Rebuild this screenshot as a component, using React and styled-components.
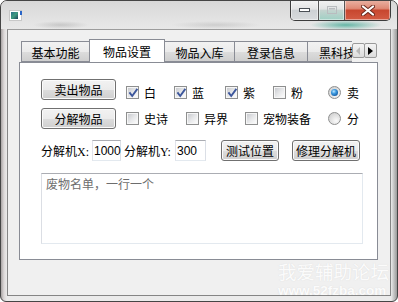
import React from "react";
import styled, { createGlobalStyle } from "styled-components";

const Global = createGlobalStyle`
  html, body { margin: 0; padding: 0; background: #fff; }
  body { font-family: "Liberation Sans", "Noto Sans CJK SC", sans-serif; font-size: 12px; color: #000; }
  * { box-sizing: border-box; }
`;

const Window = styled.div`
  position: relative;
  width: 398px;
  height: 302px;
  border: 1px solid #454545;
  border-radius: 7px 7px 6px 6px;
  background: linear-gradient(to right, #a9a4a4 0px, #dcd8d8 3px, #ebebeb 6px, #ebebeb calc(100% - 6px), #b5b5b5 calc(100% - 2px), #9a9a9a 100%);
  display: flex;
  flex-direction: column;
  overflow: hidden;
`;

const TitleBar = styled.div`
  height: 28px;
  flex: none;
  display: flex;
  align-items: flex-start;
  padding-left: 8px;
  background:
    radial-gradient(ellipse 36px 5px at 345px 24px, rgba(70,170,150,0.8), rgba(70,170,150,0)),
    radial-gradient(ellipse 28px 4px at 60px 24px, rgba(120,120,120,0.28), rgba(120,120,120,0)),
    radial-gradient(ellipse 45px 4px at 215px 24px, rgba(120,120,120,0.22), rgba(120,120,120,0)),
    linear-gradient(#d8d8d8, #e8e8e8);
`;

const AppIcon = styled.svg`
  margin-top: 9px;
  flex: none;
`;

const Captions = styled.div`
  margin-left: auto;
  margin-right: 6px;
  margin-top: -1px;
  display: flex;
  height: 21px;
  border: 1px solid #3c3c3c;
  border-top: none;
  border-radius: 0 0 5px 5px;
  overflow: hidden;
`;

const CapBtn = styled.div`
  width: ${(p) => p.$w}px;
  display: flex;
  align-items: center;
  justify-content: center;
  border-left: ${(p) => (p.$first ? "none" : "1px solid #555")};
  background: ${(p) =>
    p.$close
      ? "linear-gradient(#eab3a4 0%, #df8a76 42%, #c8472f 52%, #d35b43 100%)"
      : p.$glow
      ? "linear-gradient(#f3f3f3 0%, #e2e4e4 45%, #c4d3cf 52%, #9fd0c4 100%)"
      : "linear-gradient(#f4f4f4 0%, #e4e4e4 45%, #cdd1d4 52%, #d8dbdd 100%)"};
  box-shadow: inset 0 0 0 1px rgba(255, 255, 255, 0.45);
`;

const Client = styled.div`
  margin: 0 6px;
  height: 267px;
  flex: none;
  border: 1px solid #858585;
  border-top-color: #9c9c9c;
  background: #f0f0f0;
  padding: 9px 12px 0 11px;
`;

const TabStrip = styled.div`
  height: 23px;
  display: flex;
  align-items: flex-end;
`;

const TabList = styled.div`
  flex: 1;
  display: flex;
  align-items: flex-end;
  height: 100%;
  padding-left: 2px;
  overflow: hidden;
`;

const Tab = styled.div`
  flex: none;
  width: ${(p) => p.$w}px;
  height: ${(p) => (p.$active ? 24 : 21)}px;
  margin-left: ${(p) => (p.$first ? 0 : -1)}px;
  margin-bottom: ${(p) => (p.$active ? -1 : 0)}px;
  position: relative;
  z-index: ${(p) => (p.$active ? 2 : 1)};
  border: 1px solid #898c95;
  border-bottom: ${(p) => (p.$active ? "none" : "1px solid #898c95")};
  background: ${(p) => (p.$active ? "#fff" : "linear-gradient(#f2f2f2 0%, #ebebeb 50%, #dddddd 51%, #cfcfcf 100%)")};
  display: flex;
  align-items: center;
  justify-content: ${(p) => (p.$clip ? "flex-start" : "center")};
  padding-left: ${(p) => (p.$clip ? 11 : 0)}px;
  padding-top: ${(p) => (p.$active ? 0 : 1)}px;
  font-size: 12px;
  white-space: nowrap;
  overflow: hidden;
`;

const Scroller = styled.div`
  flex: none;
  display: flex;
  align-self: flex-end;
  margin: 0 1px 4px 0;
`;

const ScrollBtn = styled.div`
  width: 13px;
  height: 15px;
  margin-left: ${(p) => (p.$second ? -1 : 0)}px;
  border: 1px solid #9a9a9a;
  border-radius: 2px;
  background: linear-gradient(#f4f4f4, #dcdcdc);
  display: flex;
  align-items: center;
  justify-content: center;
`;

const Panel = styled.div`
  height: 198px;
  border: 1px solid #898c95;
  background: #fff;
  padding: 16px 0 0 21px;
  display: flex;
  flex-direction: column;
`;

const Row = styled.div`
  display: flex;
  align-items: center;
  height: 21px;
  margin-top: ${(p) => p.$mt || 0}px;
`;

const Button = styled.div`
  flex: none;
  width: ${(p) => p.$w}px;
  height: 21px;
  margin-left: ${(p) => p.$ml || 0}px;
  border: 1px solid #707070;
  border-radius: 3px;
  background: linear-gradient(#f2f2f2 0%, #ebebeb 50%, #dddddd 51%, #cfcfcf 100%);
  box-shadow: inset 0 0 0 1px #fbfbfb;
  display: flex;
  align-items: center;
  justify-content: center;
  font-size: 12px;
  white-space: nowrap;
`;

const Options = styled.div`
  display: flex;
  align-items: center;
  margin-left: 10px;
  transform: translateY(${(p) => p.$dy || 0}px);
`;

const Option = styled.label`
  flex: none;
  width: ${(p) => p.$w}px;
  display: flex;
  align-items: center;
  gap: 5px;
  font-size: 12px;
  white-space: nowrap;
`;

const Box = styled.span`
  flex: none;
  position: relative;
  width: 13px;
  height: 13px;
  border: 1px solid #8e8f8f;
  background: #f6f6f6;
  &::before {
    content: "";
    position: absolute;
    left: 1px;
    top: 1px;
    width: 9px;
    height: 9px;
    background: linear-gradient(135deg, #c9cbcf 0%, #e6e7e9 50%, #fbfbfb 100%);
  }
  svg { position: absolute; left: 0; top: 0; }
`;

const Radio = styled.span`
  flex: none;
  position: relative;
  width: 13px;
  height: 13px;
  border-radius: 50%;
  border: 1px solid #8e8f8f;
  background: radial-gradient(circle at 65% 70%, #fafafa 0%, #dcdcdc 60%, #c8c8c8 100%);
  &::after {
    content: "";
    display: ${(p) => (p.$on ? "block" : "none")};
    position: absolute;
    left: 2px;
    top: 2px;
    width: 7px;
    height: 7px;
    border-radius: 50%;
    background: radial-gradient(circle at 40% 35%, #bfe9ff 0%, #3f9be0 35%, #155fa8 75%, #0d3b6e 100%);
  }
`;

const FieldLabel = styled.span`
  flex: none;
  width: ${(p) => p.$w}px;
  margin-left: ${(p) => p.$ml || 0}px;
  font-size: 12px;
  white-space: nowrap;
`;

const Latin = styled.span`
  font-family: "Liberation Serif", serif;
  font-size: 12px;
`;

const Input = styled.div`
  flex: none;
  width: ${(p) => p.$w}px;
  height: 21px;
  border: 1px solid #e2e3ea;
  border-top-color: #abadb3;
  border-bottom-color: #e3e9ef;
  border-right-color: #dbdfe6;
  background: #fff;
  padding: 2px 0 0 1px;
  font-family: "Liberation Sans", sans-serif;
  font-size: 12px;
  line-height: 16px;
`;

const TextArea = styled.div`
  width: 322px;
  height: 71px;
  margin-top: 12px;
  border: 1px solid #e3e9ef;
  border-top-color: #abadb3;
  border-left-color: #dbdee4;
  background: #fff;
  padding: 4px 0 0 4px;
  color: #6d6d6d;
  font-size: 12px;
  line-height: 14px;
`;

const Watermark = styled.div`
  position: absolute;
  left: 277px;
  top: 259px;
  display: flex;
  flex-direction: column;
  align-items: flex-start;
  color: rgba(255, 255, 255, 0.92);
  text-shadow: 0 0 1px rgba(200, 200, 200, 0.6);
  pointer-events: none;
`;

const WmTitle = styled.div`
  font-family: "Noto Sans CJK SC", sans-serif;
  font-size: 18.5px;
  line-height: 22px;
  letter-spacing: 0px;
`;

const WmUrl = styled.div`
  font-family: "Liberation Sans", sans-serif;
  font-weight: bold;
  font-size: 13.5px;
  line-height: 14px;
  margin-top: 2px;
`;

const Check = () => (
  <svg width="13" height="13" viewBox="0 0 13 13">
    <path d="M3 6.2 L5.2 9 L9.8 2.6" fill="none" stroke="#3d579c" strokeWidth="1.9" strokeLinecap="square" />
  </svg>
);

const CheckOpt = ({ w, on, children }) => (
  <Option $w={w}>
    <Box>{on && <Check />}</Box>
    {children}
  </Option>
);

const RadioOpt = ({ w, on, children }) => (
  <Option $w={w} style={{ gap: 6 }}>
    <Radio $on={on} />
    {children}
  </Option>
);

export default function App() {
  return (
    <>
      <Global />
      <Window>
        <TitleBar>
          <AppIcon width="14" height="11" viewBox="0 0 14 11">
            <rect x="0.5" y="0.5" width="12" height="10" fill="#fff" stroke="#c8c8c8" />
            <defs>
              <linearGradient id="ig" x1="0" y1="0" x2="1" y2="1">
                <stop offset="0" stopColor="#2c6f8a" />
                <stop offset="0.5" stopColor="#3e9a7e" />
                <stop offset="1" stopColor="#1c3f5a" />
              </linearGradient>
            </defs>
            <rect x="2" y="2" width="7" height="7" fill="url(#ig)" />
            <rect x="11" y="1" width="2" height="4" fill="#2a66c8" />
          </AppIcon>
          <Captions>
            <CapBtn $w={27} $first>
              <svg width="13" height="6" viewBox="0 0 13 6">
                <rect x="1.5" y="1.5" width="10" height="3" fill="#fff" stroke="#4a4f55" />
              </svg>
            </CapBtn>
            <CapBtn $w={26} $glow>
              <svg width="12" height="10" viewBox="0 0 12 10">
                <rect x="1.5" y="1.5" width="9" height="7" fill="none" stroke="#b9bcbf" />
                <rect x="3" y="3" width="6" height="1.5" fill="#b9bcbf" />
              </svg>
            </CapBtn>
            <CapBtn $w={46} $close>
              <svg width="14" height="11" viewBox="0 0 14 11">
                <path d="M2 1.5 L12 9.5 M12 1.5 L2 9.5" stroke="#6b2a1e" strokeWidth="4" strokeLinecap="round" />
                <path d="M2 1.5 L12 9.5 M12 1.5 L2 9.5" stroke="#fff" strokeWidth="2.2" strokeLinecap="round" />
              </svg>
            </CapBtn>
          </Captions>
        </TitleBar>
        <Client>
          <TabStrip>
            <TabList>
              <Tab $w={69} $first>基本功能</Tab>
              <Tab $w={76} $active>物品设置</Tab>
              <Tab $w={71}>物品入库</Tab>
              <Tab $w={74}>登录信息</Tab>
              <Tab $w={62} $clip>黑科技</Tab>
            </TabList>
            <Scroller>
              <ScrollBtn>
                <svg width="5" height="8" viewBox="0 0 5 8"><path d="M4 0 L0 4 L4 8 Z" fill="#b8b8b8" /></svg>
              </ScrollBtn>
              <ScrollBtn $second>
                <svg width="5" height="8" viewBox="0 0 5 8"><path d="M0 0 L5 4 L0 8 Z" fill="#000" /></svg>
              </ScrollBtn>
            </Scroller>
          </TabStrip>
          <Panel>
            <Row>
              <Button $w={75}>卖出物品</Button>
              <Options $dy={3}>
                <CheckOpt w={48} on>白</CheckOpt>
                <CheckOpt w={51} on>蓝</CheckOpt>
                <CheckOpt w={48} on>紫</CheckOpt>
                <CheckOpt w={55}>粉</CheckOpt>
                <RadioOpt w={40} on>卖</RadioOpt>
              </Options>
            </Row>
            <Row $mt={8}>
              <Button $w={75}>分解物品</Button>
              <Options $dy={0}>
                <CheckOpt w={60}>史诗</CheckOpt>
                <CheckOpt w={59}>异界</CheckOpt>
                <CheckOpt w={83}>宠物装备</CheckOpt>
                <RadioOpt w={40}>分</RadioOpt>
              </Options>
            </Row>
            <Row $mt={11}>
              <FieldLabel $w={51}>分解机<Latin>X:</Latin></FieldLabel>
              <Input $w={29}>1000</Input>
              <FieldLabel $w={51} $ml={3}>分解机<Latin>Y:</Latin></FieldLabel>
              <Input $w={31}>300</Input>
              <Button $w={58} $ml={15}>测试位置</Button>
              <Button $w={68} $ml={13}>修理分解机</Button>
            </Row>
            <TextArea>废物名单，一行一个</TextArea>
          </Panel>
        </Client>
        <Watermark>
          <WmTitle>我爱辅助论坛</WmTitle>
          <WmUrl>www.52fzba.com</WmUrl>
        </Watermark>
      </Window>
    </>
  );
}
